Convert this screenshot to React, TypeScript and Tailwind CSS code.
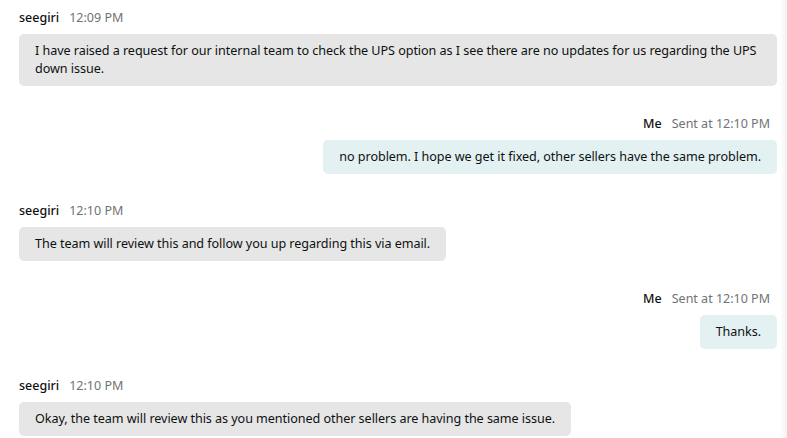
import React from "react";

type Msg = {
	from: "them" | "me";
	name: string;
	time: string;
	text: string;
};

const messages: Msg[] = [
	{
		from: "them",
		name: "seegiri",
		time: "12:09 PM",
		text: "I have raised a request for our internal team to check the UPS option as I see there are no updates for us regarding the UPS down issue.",
	},
	{
		from: "me",
		name: "Me",
		time: "Sent at 12:10 PM",
		text: "no problem. I hope we get it fixed, other sellers have the same problem.",
	},
	{
		from: "them",
		name: "seegiri",
		time: "12:10 PM",
		text: "The team will review this and follow you up regarding this via email.",
	},
	{ from: "me", name: "Me", time: "Sent at 12:10 PM", text: "Thanks." },
	{
		from: "them",
		name: "seegiri",
		time: "12:10 PM",
		text: "Okay, the team will review this as you mentioned other sellers are having the same issue.",
	},
];

const Message = ({ msg }: { msg: Msg }) => {
	const mine = msg.from === "me";
	return (
		<div className={`flex flex-col ${mine ? "items-end" : "items-start"}`}>
			{/* header */}
			<div className={`flex items-baseline gap-[10px] text-[12.5px] leading-4 ${mine ? "pr-[7px]" : ""}`}>
				<span className="font-medium text-[#0f1111]">{msg.name}</span>
				<span className="text-[#6f7373]">{msg.time}</span>
			</div>
			<div
				className={`mt-2 rounded-[5px] px-4 py-2 text-[12.6px] leading-[18px] tracking-[-0.06px] text-[#0f1111] ${
					mine ? "bg-[#e3f1f3]" : "bg-[#e6e6e6]"
				}`}>
				{msg.text}
			</div>
		</div>
	);
};

export default function App() {
	return (
		<div
			className="relative h-[438px] w-[787px] overflow-hidden bg-white"
			style={{ fontFamily: '"Noto Sans", "Open Sans", sans-serif' }}>
			<div className="flex flex-col gap-[29.5px] pl-[19px] pr-[10px] pt-[10px]">
				{messages.map((m, i) => (
					<Message key={i} msg={m} />
				))}
			</div>
			{/* faint scroll shadow on the right */}
			<div className="absolute right-0 top-0 h-full w-[7px] bg-gradient-to-r from-white to-[#f2f2f2]" />
		</div>
	);
}
